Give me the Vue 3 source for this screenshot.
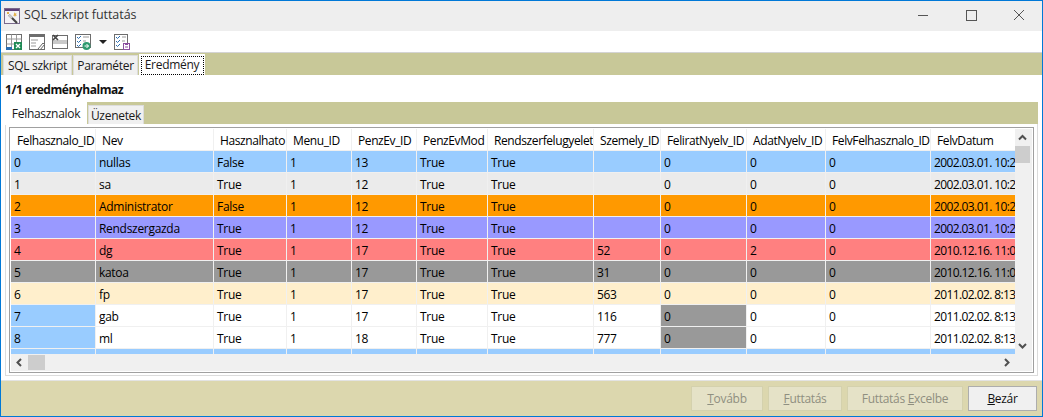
<script setup>
const columns = [
  { name: 'Felhasznalo_ID', w: 84 },
  { name: 'Nev', w: 117 },
  { name: 'Hasznalhato', w: 72 },
  { name: 'Menu_ID', w: 64 },
  { name: 'PenzEv_ID', w: 64 },
  { name: 'PenzEvMod', w: 70 },
  { name: 'Rendszerfelugyelet', w: 105 },
  { name: 'Szemely_ID', w: 66 },
  { name: 'FeliratNyelv_ID', w: 85 },
  { name: 'AdatNyelv_ID', w: 78 },
  { name: 'FelvFelhasznalo_ID', w: 104 },
  { name: 'FelvDatum', w: 90 }
]
const gridCols = columns.map(c => c.w + 'px').join(' ')
const rows = [
  { c: 'blue', v: ['0', 'nullas', 'False', '1', '13', 'True', 'True', '', '0', '0', '0', '2002.03.01. 10:21'] },
  { c: 'grey', v: ['1', 'sa', 'True', '1', '12', 'True', 'True', '', '0', '0', '0', '2002.03.01. 10:21'] },
  { c: 'orange', v: ['2', 'Administrator', 'False', '1', '12', 'True', 'True', '', '0', '0', '0', '2002.03.01. 10:21'] },
  { c: 'violet', v: ['3', 'Rendszergazda', 'True', '1', '12', 'True', 'True', '', '0', '0', '0', '2002.03.01. 10:21'] },
  { c: 'red', v: ['4', 'dg', 'True', '1', '17', 'True', 'True', '52', '0', '2', '0', '2010.12.16. 11:05'] },
  { c: 'dark', v: ['5', 'katoa', 'True', '1', '17', 'True', 'True', '31', '0', '0', '0', '2010.12.16. 11:05'] },
  { c: 'cream', v: ['6', 'fp', 'True', '1', '17', 'True', 'True', '563', '0', '0', '0', '2011.02.02. 8:13'] },
  { c: 'white', v: ['7', 'gab', 'True', '1', '17', 'True', 'True', '116', '0', '0', '0', '2011.02.02. 8:13'], first: 'blue', lang: 'dark' },
  { c: 'white', v: ['8', 'ml', 'True', '1', '18', 'True', 'True', '777', '0', '0', '0', '2011.02.02. 8:13'], first: 'blue', lang: 'dark' },
  { c: 'blue', v: ['', '', '', '', '', '', '', '', '', '', '', ''] }
]
function cellClass(row, i) {
  const out = []
  if (i === 0 && row.first) out.push(row.first)
  else if (i === 8 && row.lang) out.push(row.lang)
  else out.push(row.c)
  if (i === 11) out.push('date')
  return out
}
</script>

<template>
  <div class="win">
    <header class="title">
      <svg class="appicon" width="16" height="16" viewBox="0 0 16 16">
        <rect x="0.5" y="0.5" width="15" height="15" fill="#f4f2f6" stroke="#7a6a8c"/>
        <rect x="1" y="1" width="14" height="2" fill="#5e3f78"/>
        <path d="M5 7 L13 15" stroke="#444" stroke-width="2.2"/>
        <path d="M5 7 L8 10" stroke="#ccc" stroke-width="2.2"/>
        <path d="M10 4l1 1.500 1.500-.5-.5 1.500 1 1-1.500.2-.5 1.300-.7-1.300-1.300-.2 1-1z" fill="#e2b04a"/>
        <rect x="3" y="4" width="2" height="2" fill="#e2b04a"/>
      </svg>
      <span class="title-text">SQL szkript futtatás</span>
      <div class="winbtns">
        <svg width="12" height="12" viewBox="0 0 12 12"><path d="M1 6.500h10" stroke="#555" fill="none"/></svg>
        <svg width="12" height="12" viewBox="0 0 12 12"><rect x="1.500" y="1.500" width="10" height="10" stroke="#555" fill="none"/></svg>
        <svg width="12" height="12" viewBox="0 0 12 12"><path d="M1 1l10 10M11 1L1 11" stroke="#555" fill="none"/></svg>
      </div>
    </header>

    <div class="toolbar">
      <svg width="16" height="16" viewBox="0 0 16 16">
        <rect x="0.500" y="0.500" width="15" height="15" fill="#fff" stroke="#6d6d6d"/>
        <path d="M0.500 5h15M0.500 10h15M5.500 0.500v15M10.500 0.500v15" stroke="#9a9a9a"/>
        <rect x="0" y="13" width="6" height="3" fill="#2a6db0"/>
        <rect x="8" y="8" width="8" height="8" fill="#1f8a55"/>
        <path d="M10 10l4 4M14 10l-4 4" stroke="#fff" stroke-width="1.300"/>
      </svg>
      <svg width="16" height="16" viewBox="0 0 16 16">
        <rect x="0.500" y="0.500" width="15" height="15" fill="#fff" stroke="#6d6d6d"/>
        <rect x="0" y="0" width="16" height="3" fill="#6d6d6d"/>
        <path d="M2 6h7M2 9h5M2 12h5" stroke="#999"/>
        <path d="M9 15l5-6 1.500 1.500-4.500 5.500z" fill="#fff" stroke="#666"/>
      </svg>
      <svg width="16" height="16" viewBox="0 0 16 16">
        <rect x="0.500" y="1.500" width="15" height="13" fill="#fff" stroke="#6d6d6d"/>
        <rect x="1" y="6" width="14" height="4" fill="#c9c9c9"/>
        <path d="M1 1l5 5M6 1L1 6" stroke="#444" stroke-width="1.600"/>
      </svg>
      <span class="tool-split">
        <svg width="16" height="16" viewBox="0 0 16 16">
          <rect x="0.500" y="0.500" width="15" height="13" fill="#fff" stroke="#6d6d6d"/>
          <path d="M2 3l1.500 1.500L6 2M2 7l1.500 1.500L6 6M2 11l1.500 1.500L6 10" stroke="#2a6db0" fill="none"/>
          <path d="M8 3h6M8 7h3" stroke="#999"/>
          <circle cx="11.500" cy="12" r="4" fill="#2f9a70"/>
          <path d="M9.500 12h4M11.500 10l2 2-2 2" stroke="#fff" fill="none"/>
        </svg>
        <span class="caret"></span>
      </span>
      <svg width="16" height="16" viewBox="0 0 16 16">
        <rect x="0.500" y="0.500" width="13" height="15" fill="#fff" stroke="#6d6d6d"/>
        <path d="M2 3l1.500 1.500L6 2M2 7l1.500 1.500L6 6M2 11l1.500 1.500L6 10" stroke="#2a6db0" fill="none"/>
        <path d="M8 3h4M8 7h3" stroke="#999"/>
        <rect x="9.500" y="9.500" width="6" height="6" fill="#fff" stroke="#8a4f9e"/>
        <rect x="11" y="9" width="3" height="2" fill="#8a4f9e"/>
        <path d="M11 13h3" stroke="#8a4f9e"/>
      </svg>
    </div>

    <nav class="tabs outer">
      <span class="tab">SQL szkript</span>
      <span class="tab">Paraméter</span>
      <span class="tab active"><span class="focus">Eredmény</span></span>
    </nav>

    <main class="body">
      <div class="heading">1/1 eredményhalmaz</div>
      <nav class="tabs inner">
        <span class="tab active">Felhasznalok</span>
        <span class="tab">Üzenetek</span>
      </nav>
      <section class="page">
        <div class="gridbox">
          <div class="viewport">
            <div class="table">
              <div class="hrow" :style="{ gridTemplateColumns: gridCols }">
                <div v-for="c in columns" :key="c.name" class="hcell">{{ c.name }}</div>
              </div>
              <div v-for="(r, ri) in rows" :key="ri" class="row" :style="{ gridTemplateColumns: gridCols }">
                <div v-for="(v, i) in r.v" :key="i" class="cell" :class="cellClass(r, i)">{{ v }}</div>
              </div>
            </div>
            <div class="vbar">
              <svg width="15" height="17" viewBox="0 0 15 17"><path d="M4 10.500l3.500-3.500L11 10.500" stroke="#505050" stroke-width="2" fill="none"/></svg>
              <div class="vthumb"></div>
              <div class="grow"></div>
              <svg width="15" height="17" viewBox="0 0 15 17"><path d="M4 7l3.500 3.500L11 7" stroke="#505050" stroke-width="2" fill="none"/></svg>
            </div>
          </div>
          <div class="hbar">
            <svg width="17" height="17" viewBox="0 0 17 17"><path d="M10 5L6.500 8.500 10 12" stroke="#505050" stroke-width="2" fill="none"/></svg>
            <div class="hthumb"></div>
            <div class="grow"></div>
            <svg width="17" height="17" viewBox="0 0 17 17"><path d="M7 5l3.500 3.500L7 12" stroke="#505050" stroke-width="2" fill="none"/></svg>
            <div class="corner"></div>
          </div>
        </div>
      </section>
    </main>

    <footer class="footer">
      <button class="btn off b1"><u>T</u>ovább</button>
      <button class="btn off b2"><u>F</u>uttatás</button>
      <button class="btn off b3">Futtatás <u>E</u>xcelbe</button>
      <button class="btn b4"><u>B</u>ezár</button>
    </footer>
  </div>
</template>

<style>
html, body { margin: 0; padding: 0; background: #fff; overflow: hidden; }
</style>

<style scoped>
.win {
  width: 1043px; height: 417px; box-sizing: border-box;
  border: 1px solid #0078d7; background: #fff;
  display: flex; flex-direction: column;
  font-family: "Open Sans", "Noto Sans", sans-serif; font-size: 12px; color: #000;
  letter-spacing: -0.3px;
  overflow: hidden;
}
.title {
  height: 30px; flex: none; background: #eeeeee;
  display: flex; align-items: center; padding-left: 3px;
}
.appicon { margin-right: 4px; margin-top: 0; }
.title-text { font-size: 12.5px; color: #333; margin-top: -3px; letter-spacing: -0.05px; }
.winbtns { margin-left: auto; display: flex; gap: 36px; margin-right: 17px; margin-top: -2px; }
.toolbar {
  height: 21px; flex: none; background: #fff;
  display: flex; align-items: center; gap: 7px; padding-left: 5px;
}
.tool-split { display: inline-flex; align-items: center; gap: 8px; }
.caret { width: 0; height: 0; border: 4px solid transparent; border-top: 4px solid #222; border-bottom: 0; }
.tabs { display: flex; flex: none; background: #c8c898; }
.outer {
  height: 22px; border-top: 1px solid #d4d4d4; padding-left: 2px; align-items: flex-end; gap: 1px;
}
.tab {
  height: 20px; box-sizing: border-box; display: flex; align-items: center; justify-content: center;
  background: #f0f0f0; border: 1px solid #dcdcdc; border-bottom: 0;
  color: #1a1a1a; white-space: nowrap;
}
.outer .tab:nth-child(1) { width: 69px; }
.outer .tab:nth-child(2) { width: 65px; }
.outer .tab:nth-child(3) { width: 66px; }
.tab.active { background: #fff; height: 21px; border-color: #fff; }
.focus {
  outline: 1px dotted #000; outline-offset: -1px;
  width: 63px; height: 19px; line-height: 18px; text-align: center; display: block;
}
.body { flex: 1; min-height: 0; background: #fff; padding: 0 4px 4px; display: flex; flex-direction: column; border-bottom: 1px solid #e3e3e3; }
.heading { height: 27px; font-weight: 700; line-height: 29px; flex: none; color: #111; letter-spacing: -0.45px; }
.inner { height: 22px; align-items: flex-end; gap: 1px; }
.inner .tab:nth-child(1) { width: 82px; height: 23px; margin-bottom: -1px; position: relative; padding-bottom: 1px; }
.inner .tab:nth-child(2) { width: 56px; height: 19px; }
.page {
  flex: 1; min-height: 0; border: 1px solid #dcdcdc; border-top: 0; padding: 3px 3px 2px;
}
.gridbox {
  height: 100%; box-sizing: border-box; border: 1px solid #a0a0a0; padding: 1px;
  display: flex; flex-direction: column; background: #fff;
}
.viewport { flex: 1; min-height: 0; display: flex; }
.table { flex: 1; min-width: 0; overflow: hidden; background: #f0f0f0; display: flex; flex-direction: column; gap: 1px; }
.hrow, .row { display: grid; column-gap: 1px; flex: none; }
.hrow { height: 21px; }
.hcell { background: #fff; line-height: 18px; padding: 3px 0 0 6px; white-space: nowrap; overflow: hidden; letter-spacing: -0.4px; }
.row { height: 21px; }
.cell { line-height: 19px; padding: 2px 0 0 3px; white-space: nowrap; overflow: hidden; }
.date { letter-spacing: -0.6px; }
.blue { background: #99ccff; }
.grey { background: #ebebeb; }
.orange { background: #ff9900; }
.violet { background: #9999ff; }
.red { background: #ff8080; }
.dark { background: #999999; }
.cream { background: #ffefcc; }
.white { background: #fff; }
.vbar { width: 17px; flex: none; background: #f0f0f0; display: flex; flex-direction: column; }
.vthumb { height: 17px; width: 15px; background: #cdcdcd; }
.hbar { height: 17px; flex: none; background: #f0f0f0; display: flex; }
.hthumb { width: 17px; height: 15px; margin-top: 1px; background: #cdcdcd; }
.corner { width: 17px; }
.grow { flex: 1; }
.footer {
  height: 35px; flex: none; background: #dcd7ae; display: flex; align-items: center;
  justify-content: flex-end; gap: 5px; padding-right: 5px;
}
.btn {
  height: 25px; box-sizing: border-box; font: inherit; letter-spacing: inherit; padding: 0;
  background: #f0f0f0; border: 1px solid #adadad; color: #111;
}
.off { background: #e5e2c7; border-color: #d4d1ad; color: #8f8f80; }
.b1 { width: 72px; } .b2 { width: 74px; } .b3 { width: 116px; } .b4 { width: 69px; }
</style>
